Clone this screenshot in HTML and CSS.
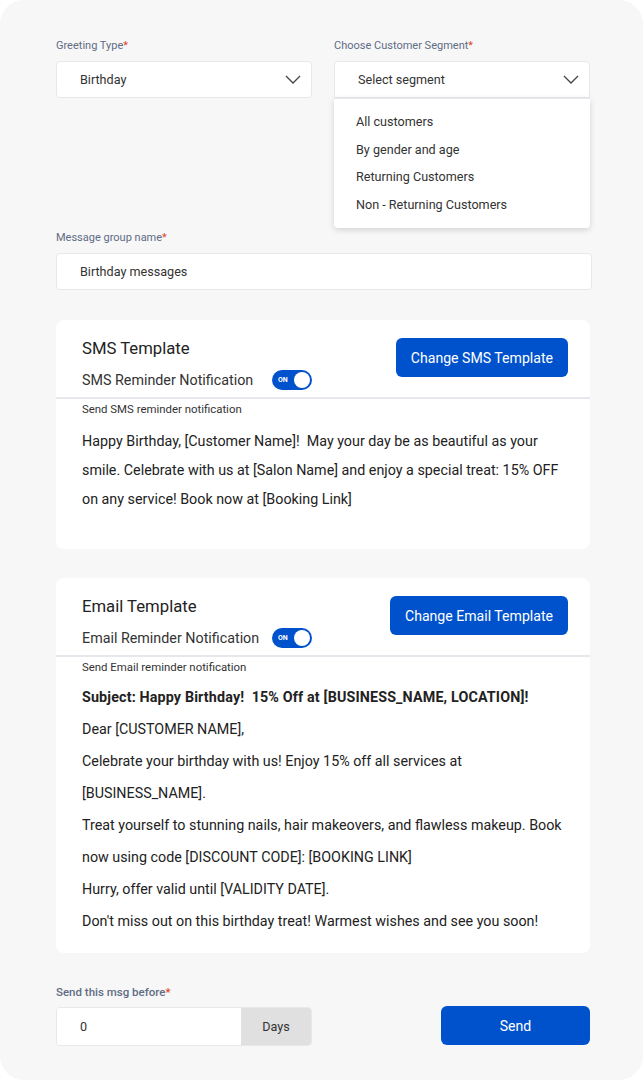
FILE: index.html
```html
<!DOCTYPE html>
<html lang="en">
<head>
    <meta charset="UTF-8">
    <meta name="viewport" content="width=device-width, initial-scale=1.0">
    <title>Greeting messages</title>
    <link rel="stylesheet" href="styles.css">
</head>
<body>

    <div class="panel">

        <div class="row">
            <div class="field">
                <label class="label">Greeting Type<span class="req">*</span></label>
                <div class="select">
                    <span>Birthday</span>
                    <svg class="chevron" width="16" height="9" viewBox="0 0 16 9"><path d="M1 1l7 7 7-7" fill="none" stroke="#444" stroke-width="1.3"/></svg>
                </div>
            </div>
            <div class="field">
                <label class="label">Choose Customer Segment<span class="req">*</span></label>
                <div class="select open">
                    <span>Select segment</span>
                    <svg class="chevron" width="16" height="9" viewBox="0 0 16 9"><path d="M1 1l7 7 7-7" fill="none" stroke="#444" stroke-width="1.3"/></svg>
                </div>
                <ul class="menu">
                    <li>All customers</li>
                    <li>By gender and age</li>
                    <li>Returning Customers</li>
                    <li>Non - Returning Customers</li>
                </ul>
            </div>
        </div>

        <div class="field group-name">
            <label class="label">Message group name<span class="req">*</span></label>
            <div class="input">Birthday messages</div>
        </div>

        <section class="card">
            <div class="card-head">
                <div>
                    <h3>SMS Template</h3>
                    <div class="notify">
                        <span>SMS Reminder Notification</span>
                        <span class="toggle"><b>ON</b><i></i></span>
                    </div>
                </div>
                <button class="btn">Change SMS Template</button>
            </div>
            <p class="hint">Send SMS reminder notification</p>
            <div class="sms-body">
                Happy Birthday, [Customer Name]!&nbsp; May your day be as beautiful as your smile. Celebrate with us at [Salon Name] and enjoy a special treat: 15% OFF on any service! Book now at [Booking Link]
            </div>
        </section>

        <section class="card">
            <div class="card-head">
                <div>
                    <h3>Email Template</h3>
                    <div class="notify">
                        <span>Email Reminder Notification</span>
                        <span class="toggle"><b>ON</b><i></i></span>
                    </div>
                </div>
                <button class="btn">Change Email Template</button>
            </div>
            <p class="hint">Send Email reminder notification</p>
            <div class="email-body">
                <p><strong>Subject: Happy Birthday!&nbsp; 15% Off at [BUSINESS_NAME, LOCATION]!</strong></p>
                <p>Dear [CUSTOMER NAME],</p>
                <p>Celebrate your birthday with us! Enjoy 15% off all services at [BUSINESS_NAME].</p>
                <p>Treat yourself to stunning nails, hair makeovers, and flawless makeup. Book now using code [DISCOUNT CODE]: [BOOKING LINK]</p>
                <p>Hurry, offer valid until [VALIDITY DATE].</p>
                <p>Don't miss out on this birthday treat! Warmest wishes and see you soon!</p>
            </div>
        </section>

        <div class="footer">
            <div class="field">
                <label class="label strong">Send this msg before<span class="req">*</span></label>
                <div class="input-group">
                    <span class="value">0</span>
                    <span class="addon">Days</span>
                </div>
            </div>
            <button class="btn send">Send</button>
        </div>

    </div>

</body>
</html>
```

FILE: styles.css
```css
body {
    margin: 0;
    background: #ffffff;
    font-family: Roboto, 'Liberation Sans', sans-serif;
    color: #222;
}
.panel {
    background: #f7f7f7;
    border-radius: 24px;
    min-height: 1080px;
    box-sizing: border-box;
    padding: 38px 53px 0 56px;
}
.row {
    display: grid;
    grid-template-columns: 1fr 1fr;
    gap: 22px;
    align-items: start;
}
.label {
    display: block;
    font-size: 11px;
    line-height: 16px;
    color: #5f6c86;
    margin-bottom: 7px;
}
.label.strong {
    font-size: 11.5px;
    font-weight: 500;
}
.req {
    color: #e0452f;
}
.select, .input {
    display: flex;
    align-items: center;
    justify-content: space-between;
    height: 37px;
    box-sizing: border-box;
    background: white;
    border: 1px solid #e6e8ec;
    border-radius: 4px;
    padding: 0 10px 0 23px;
    font-size: 12.6px;
    color: #333;
}
.select.open {
    border-radius: 4px 4px 0 0;
}
.menu {
    list-style: none;
    margin: 0;
    padding: 9px 0 10px;
    background: white;
    border-top: 1px solid #e6e8ec;
    box-shadow: 0 2px 6px rgba(0, 0, 0, 0.15);
    border-radius: 0 0 4px 4px;
}
.menu li {
    font-size: 12.6px;
    line-height: 27.5px;
    padding-left: 22px;
    color: #333;
}
.group-name {
    margin-top: 2px;
    margin-right: -2px;
}
.card {
    background: white;
    border-radius: 8px;
    margin-top: 30px;
}
.card + .card {
    margin-top: 29px;
}
.card-head {
    display: flex;
    justify-content: space-between;
    align-items: flex-start;
    padding: 17px 22px 7px 26px;
    border-bottom: 2px solid #e6e8ee;
}
.card-head h3 {
    margin: 0;
    font-size: 16.7px;
    font-weight: 400;
    line-height: 24px;
}
.notify {
    display: flex;
    align-items: center;
    justify-content: space-between;
    width: 230px;
    margin-top: 9px;
    font-size: 14.3px;
    color: #333;
}
.toggle {
    display: inline-flex;
    align-items: center;
    justify-content: space-between;
    width: 40px;
    height: 20px;
    box-sizing: border-box;
    padding: 0 2px 0 6px;
    background: #0052cc;
    border-radius: 10px;
}
.toggle b {
    color: white;
    font-size: 7px;
    font-weight: 700;
}
.toggle i {
    width: 16px;
    height: 16px;
    border-radius: 50%;
    background: white;
}
.btn {
    background: #0052cc;
    color: white;
    border: none;
    border-radius: 6px;
    font-family: inherit;
    font-size: 14.1px;
    height: 39px;
    padding: 0 15px;
    margin-top: 1px;
    cursor: pointer;
}
.hint {
    margin: 2px 26px 0;
    font-size: 11.4px;
    line-height: 16px;
    color: #333;
}
.sms-body {
    padding: 10px 26px 35px;
    font-size: 14.3px;
    line-height: 29px;
}
.email-body {
    padding: 6px 26px 16px;
    font-size: 14.3px;
    line-height: 32px;
}
.email-body p {
    margin: 0;
}
.email-body strong {
    font-weight: 700;
    letter-spacing: 0.15px;
}
.footer {
    display: flex;
    justify-content: space-between;
    align-items: flex-end;
    margin-top: 31px;
}
.footer .field {
    width: 256px;
}
.input-group {
    display: flex;
    height: 37px;
    border: 1px solid #e6e8ec;
    border-radius: 4px;
    overflow: hidden;
    font-size: 12.6px;
    color: #333;
}
.input-group .value {
    flex: 1;
    background: white;
    display: flex;
    align-items: center;
    padding-left: 23px;
}
.input-group .addon {
    width: 70px;
    background: #e0e0e0;
    display: flex;
    align-items: center;
    justify-content: center;
}
.btn.send {
    width: 149px;
    margin-bottom: 1px;
}
```
